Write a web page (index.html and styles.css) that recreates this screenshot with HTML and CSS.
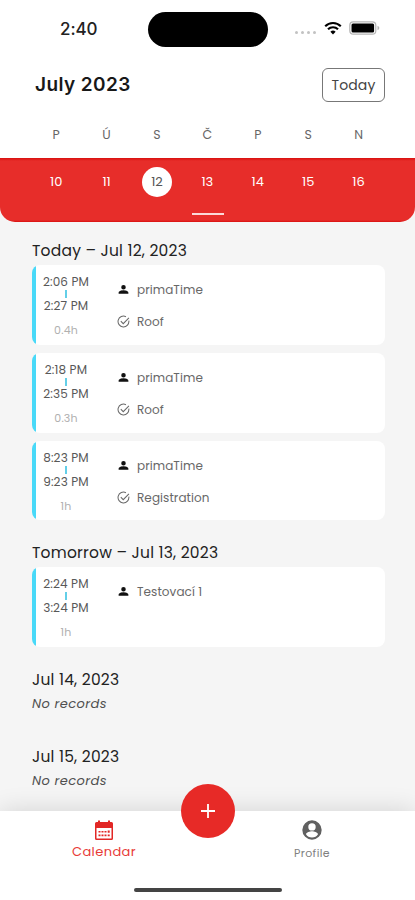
FILE: index.html
```html
<!DOCTYPE html>
<html lang="en">
<head>
<meta charset="utf-8">
<meta name="viewport" content="width=device-width, initial-scale=1">
<title>Calendar</title>
<link rel="stylesheet" href="styles.css">
</head>
<body>
<svg class="defs" aria-hidden="true">
  <symbol id="person" viewBox="0 0 24 24"><path d="M12 12a4.200 4.200 0 1 0 0-8.400a4.200 4.200 0 0 0 0 8.400zM3 20v-2.200c0-3 6-4.300 9-4.300s9 1.300 9 4.300V20z"/></symbol>
  <symbol id="task" viewBox="0 0 24 24"><path d="M21.800 10.500A10 10 0 1 1 16.500 3.100M7 11.500l4.500 4.500L22 5.500" fill="none" stroke="currentColor" stroke-width="1.900"/></symbol>
</svg>
<div class="phone">
  <header class="status">
    <span class="clock">2:40</span>
    <span class="island"></span>
    <span class="signals">
      <span class="dots"><i></i><i></i><i></i><i></i></span>
      <svg class="wifi" viewBox="0 0 18 14"><path d="M1.200 5.200a11 11 0 0 1 15.600 0M4 8.300a7 7 0 0 1 10 0" fill="none" stroke="#000" stroke-width="2.100"/><path d="M9 13.400l-2.600-2.700a3.700 3.700 0 0 1 5.200 0z"/></svg>
      <svg class="battery" viewBox="0 0 31 14"><rect x=".8" y=".8" width="26" height="12.400" rx="3.500" fill="none" stroke="#b5b5b5" stroke-width="1.200"/><rect x="2.500" y="2.500" width="22.600" height="9" rx="1.500"/><path d="M28.500 4.800c2.400.9 2.400 3.500 0 4.400z" fill="#b5b5b5"/></svg>
    </span>
  </header>
  <div class="heading"><h1>July 2023</h1><button class="today">Today</button></div>
  <div class="week names"><span>P</span><span>Ú</span><span>S</span><span>Č</span><span>P</span><span>S</span><span>N</span></div>
  <div class="corners">
    <div class="strip">
      <div class="week dates"><span>10</span><span>11</span><span class="selected">12</span><span>13</span><span>14</span><span>15</span><span>16</span></div>
      <div class="handle"></div>
    </div>
  </div>
  <main>
    <section class="day-full">
      <h2>Today – Jul 12, 2023</h2>
      <article class="card">
        <div class="times"><span>2:06 PM</span><i></i><span>2:27 PM</span><small>0.4h</small></div>
        <div class="info"><p><svg><use href="#person"/></svg>primaTime</p><p><svg><use href="#task"/></svg>Roof</p></div>
      </article>
      <article class="card">
        <div class="times"><span>2:18 PM</span><i></i><span>2:35 PM</span><small>0.3h</small></div>
        <div class="info"><p><svg><use href="#person"/></svg>primaTime</p><p><svg><use href="#task"/></svg>Roof</p></div>
      </article>
      <article class="card">
        <div class="times"><span>8:23 PM</span><i></i><span>9:23 PM</span><small>1h</small></div>
        <div class="info"><p><svg><use href="#person"/></svg>primaTime</p><p><svg><use href="#task"/></svg>Registration</p></div>
      </article>
    </section>
    <section class="day-full">
      <h2>Tomorrow – Jul 13, 2023</h2>
      <article class="card">
        <div class="times"><span>2:24 PM</span><i></i><span>3:24 PM</span><small>1h</small></div>
        <div class="info"><p><svg><use href="#person"/></svg>Testovací 1</p></div>
      </article>
    </section>
    <section class="day-empty"><h2>Jul 14, 2023</h2><p>No records</p></section>
    <section class="day-empty"><h2>Jul 15, 2023</h2><p>No records</p></section>
  </main>
  <nav>
    <a class="tab active"><svg viewBox="0 0 20 20"><path fill-rule="evenodd" d="M4 .5h2V2h8V.5h2V2h1.500A1.500 1.500 0 0 1 19 3.500v15a1.500 1.500 0 0 1-1.500 1.500h-15A1.500 1.500 0 0 1 1 18.500v-15A1.500 1.500 0 0 1 2.500 2H4zM2.500 8v10.500h15V8z"/><path d="M4.500 11h2v1.600h-2zm3 0h2v1.600h-2zm3 0h2v1.600h-2zm3.200-.4h2v2.200h-2zM4.500 14.600h2v1.600h-2zm3 0h2v1.600h-2zm3 0h2v1.600h-2zm3.200 0h2v1.600h-2z"/></svg><span>Calendar</span></a>
    <button class="add" aria-label="Add"><svg viewBox="0 0 14 14"><path d="M7 0v14M0 7h14" stroke="#fff" stroke-width="1.800"/></svg></button>
    <a class="tab"><svg viewBox="0 0 20 20"><path fill-rule="evenodd" d="M10 .3a9.700 9.700 0 1 0 0 19.400a9.700 9.700 0 0 0 0-19.400zM10 3.200a3.700 3.700 0 1 1 0 7.400a3.700 3.700 0 0 1 0-7.400zM10 17.500a7 7 0 0 1-6-3.300c.2-2 4-3 6-3s5.800 1 6 3a7 7 0 0 1-6 3.300z"/></svg><span>Profile</span></a>
    <div class="home"></div>
  </nav>
</div>
</body>
</html>
```
FILE: styles.css
```css
* { box-sizing: border-box; margin: 0; padding: 0; }
body { font-family: Poppins, Inter, sans-serif; font-feature-settings: "cv11"; color: #222; background: #fff; }
.defs { display: none; }
.phone { width: 415px; height: 900px; display: flex; flex-direction: column; overflow: hidden; }
button { font: inherit; font-feature-settings: inherit; }

.status { height: 58px; flex: none; display: grid; grid-template-columns: 148px 120px 1fr; align-items: center; }
.clock { padding-left: 60px; font: 500 17px/24px Inter, sans-serif; letter-spacing: -.1px; color: #222; }
.island { height: 35px; border-radius: 18px; background: #000; }
.signals { display: flex; align-items: center; padding-left: 27px; margin-top: -2px; }
.dots { display: flex; gap: 3px; margin: 9px 8px 0 0; }
.dots i { width: 3px; height: 3px; border-radius: 50%; background: #c2c2c2; }
.wifi { width: 18px; height: 14px; margin-right: 7px; }
.battery { width: 31px; height: 14px; }

.heading { height: 54px; flex: none; padding: 0 30px 0 35px; display: flex; justify-content: space-between; align-items: center; }
h1 { font: 600 19px/26px Inter, sans-serif; letter-spacing: .4px; color: #181818; }
.today { width: 63px; height: 34px; border: 1px solid #777; border-radius: 6px; background: #fff; color: #444; font-size: 14px; letter-spacing: .1px; }

.week { display: grid; grid-template-columns: repeat(7, 50.4px); padding-left: 31px; text-align: center; }
.names { height: 46px; flex: none; line-height: 46px; font-size: 12.5px; color: #666; }
.corners { height: 64px; flex: none; background: #f5f5f5; }
.strip { height: 64px; background: linear-gradient(#d9100f, #e72d2a 3px, #e72d2a 62px, #d9100f); border-radius: 0 0 15px 15px; }
.dates { height: 47px; align-items: center; justify-items: center; color: #fff; font-size: 13px; }
.selected { width: 30px; height: 30px; line-height: 30px; border-radius: 50%; background: #fff; color: #555; }
.handle { width: 32px; height: 2px; margin: 8px auto 0; background: #fbd9d8; }

main { height: 589px; flex: none; padding: 16px 30px 0 32px; background: #f5f5f5; }
h2 { height: 24px; line-height: 25px; font-size: 15.5px; font-weight: 400; color: #222; letter-spacing: .22px; }
.day-full { margin-bottom: 20px; }
.day-full h2 { margin-bottom: 3px; }
.card { height: 80px; margin-bottom: 8px; padding-left: 4px; display: grid; grid-template-columns: 60px 1fr; background: linear-gradient(90deg, #48d9f8 4px, #fff 4px); border-radius: 8px; }
.card:last-child { height: 79px; }
.day-full + .day-full .card { height: 80px; }
.times { display: flex; flex-direction: column; align-items: center; padding-top: 9px; font-size: 12px; line-height: 16px; letter-spacing: .15px; color: #585858; }
.times i { width: 2px; height: 8px; background: #63cfe8; }
.times small { margin-top: 8px; font-size: 11px; color: #b0b0b0; }
.info { padding: 9px 0 0 21px; }
.info p { display: flex; align-items: center; height: 32px; font-size: 12px; color: #686868; letter-spacing: .07px; }
.info svg { width: 13px; height: 13px; margin: -1px 7px 0 0; }
.info p:first-child svg { fill: #111; }
.day-empty { height: 77px; }
.day-empty p { height: 24px; margin-top: 1px; line-height: 24px; font-size: 13px; font-style: italic; color: #505050; letter-spacing: .4px; }

nav { height: 89px; flex: none; position: relative; background: #fff; box-shadow: 0 0 24px rgba(0,0,0,.14); display: flex; justify-content: space-between; padding: 9px 51px 0 52px; }
.tab { width: 104px; display: flex; flex-direction: column; align-items: center; color: #808080; font-size: 11px; line-height: 18px; letter-spacing: .4px; }
.tab svg { width: 20px; height: 20px; fill: #606060; margin-bottom: 4px; }
.active { color: #e83b38; font-size: 13px; }
.active svg { fill: #e22725; margin-bottom: 3px; }
.add { position: absolute; left: 181px; top: -27px; width: 54px; height: 54px; border: 0; border-radius: 50%; background: #e72a27; display: grid; place-items: center; }
.add svg { width: 14px; height: 14px; }
.home { position: absolute; left: 134px; top: 77px; width: 148px; height: 4px; border-radius: 2px; background: #444; }
```
